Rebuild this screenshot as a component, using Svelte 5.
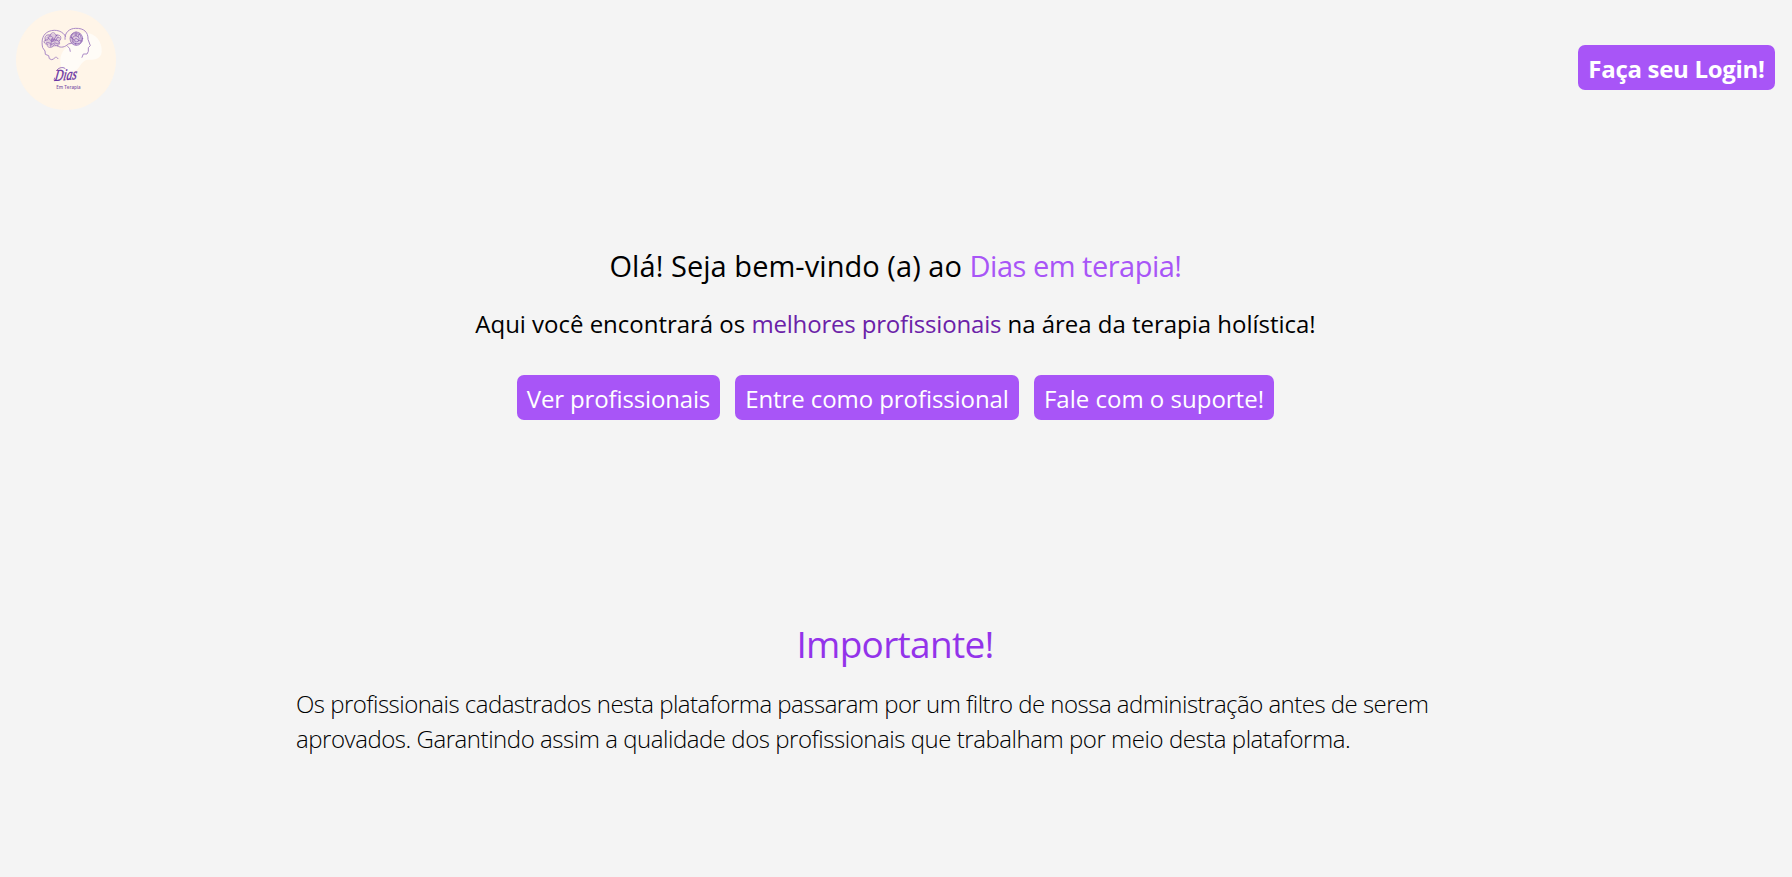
<script>
  const actions = [
    { label: 'Ver profissionais', width: 203, spacing: -0.15 },
    { label: 'Entre como profissional', width: 284, spacing: -0.08 },
    { label: 'Fale com o suporte!', width: 240, spacing: 0 }
  ];
</script>

<div class="page">
  <header>
    <svg class="logo" viewBox="0 0 300 300" role="img" aria-label="Dias em Terapia">
      <circle cx="150" cy="150" r="150" fill="#fff5e8" />
      <path d="M137 176C126 142 139 119 158 109C181 98 184 66 211 69C240 70 259 96 257 126C255 147 235 150 215 149C196 151 193 174 176 184C158 191 144 188 137 176Z" fill="#fffcf7" />
      <g fill="none" stroke="#ab8ac6" stroke-width="3" stroke-linecap="round" stroke-linejoin="round">
        <path d="M126 146C122 139 117 141 113 147L107 149L100 146L98 137L88 133L87 123L80 113C75 91 80 72 99 64C120 56 142 64 149 80" />
        <path d="M147 88C145 68 160 55 179 55C204 54 217 67 216 88L223 107L217 113L217 124L213 132L202 132L198 142" />
        <path d="M155 109Q163 113 163 124M124 108C136 115 147 111 157 102L168 99" />
      </g>
      <g fill="#b79acf" fill-opacity=".45">
        <ellipse cx="110" cy="91" rx="23" ry="20" />
        <ellipse cx="181" cy="86" rx="19" ry="20" />
      </g>
      <g fill="none" stroke="#8357ae" stroke-width="2" stroke-linecap="round">
        <path d="M88 91C83 79 93 71 103 76C105 64 119 67 120 77C136 70 139 89 128 94C137 103 122 112 115 104C108 117 91 113 94 103C81 102 82 89 91 90C102 90 93 75 106 79C118 84 101 92 114 93C126 94 118 77 130 83M91 99C104 93 101 108 112 101C121 94 125 108 128 99M96 83L109 96L123 74M104 109L107 86L126 92" />
        <ellipse cx="181" cy="86" rx="19" ry="20" />
        <path d="M167 85Q164 68 178 72Q195 69 195 83Q199 101 184 101Q166 102 169 87Q172 74 184 78Q194 83 187 94Q176 99 176 88Q179 82 185 88M164 82Q175 84 174 96M180 66L180 78M191 71L186 80M187 91L198 93M178 99L180 105" />
      </g>
      <text class="signature" transform="translate(115 213) rotate(-5) skewX(-14)" textLength="66" lengthAdjust="spacingAndGlyphs">Dias</text>
      <path d="M121 183C126 174 139 169 148 176M119 208Q112 216 116 203" fill="none" stroke="#6630a3" stroke-width="2" />
      <text class="tagline" x="121" y="238" textLength="73" lengthAdjust="spacingAndGlyphs">Em Terapia</text>
    </svg>
    <button class="login">Faça seu Login!</button>
  </header>

  <main>
    <section class="hero">
      <h1>Olá! Seja bem-vindo (a) ao <span>Dias em terapia!</span></h1>
      <p>Aqui você encontrará os <span>melhores profissionais</span> na área da terapia holística!</p>
      <div class="actions">
        {#each actions as action}
          <button style="width: {action.width}px; letter-spacing: {action.spacing}px">{action.label}</button>
        {/each}
      </div>
    </section>

    <section class="notice">
      <h2>Importante!</h2>
      <p>
        <span>Os profissionais cadastrados nesta plataforma passaram por um filtro de nossa administração antes de serem</span>
        <span class="second">aprovados. Garantindo assim a qualidade dos profissionais que trabalham por meio desta plataforma.</span>
      </p>
    </section>
  </main>
</div>

<style>
  :global(body) {
    margin: 0;
    background: #f4f4f4;
  }

  .page {
    height: 877px;
    overflow: hidden;
    background: #f4f4f4;
    color: #000;
    font-family: "Open Sans", "Noto Sans", sans-serif;
  }

  header {
    display: flex;
    align-items: flex-start;
    justify-content: space-between;
    height: 110px;
    padding: 10px 17px 0 16px;
    box-sizing: border-box;
  }

  .logo {
    width: 100px;
    height: 100px;
  }

  .signature {
    font: italic 400 48px "Liberation Serif", serif;
    fill: #6630a3;
    stroke: #6630a3;
    stroke-width: 1px;
  }

  .tagline {
    font: 600 13px "Open Sans", sans-serif;
    fill: #805aa8;
  }

  button {
    height: 45px;
    padding: 3px 0 0;
    border: 0;
    border-radius: 7px;
    background: #a855f7;
    color: #fff;
    font: 400 24px/42px "Open Sans", sans-serif;
    white-space: nowrap;
  }

  .login {
    width: 197px;
    margin-top: 35px;
    font-weight: 700;
    letter-spacing: -0.3px;
  }

  .hero {
    display: flex;
    flex-direction: column;
    align-items: center;
    padding: 136px 1px 0 0;
  }

  h1,
  h2,
  p {
    margin: 0;
    font-weight: 400;
    white-space: nowrap;
  }

  h1 {
    font-size: 29px;
    letter-spacing: 0.05px;
    line-height: 40px;
  }

  h1 span {
    color: #a855f7;
    letter-spacing: -0.5px;
  }

  .hero p {
    margin-top: 20px;
    font-size: 24px;
    line-height: 35px;
    letter-spacing: -0.02px;
  }

  .hero p span {
    color: #6b21a8;
    letter-spacing: -0.18px;
  }

  .actions {
    display: flex;
    gap: 15px;
    margin-top: 34px;
  }

  .notice {
    display: flex;
    flex-direction: column;
    align-items: center;
    padding-top: 199px;
  }

  h2 {
    padding-right: 2px;
    color: #9333ea;
    font-size: 37px;
    letter-spacing: -0.7px;
    line-height: 50px;
  }

  .notice p {
    width: 1200px;
    margin-top: 17px;
    font-size: 24px;
    font-weight: 300;
    line-height: 35px;
  }

  .notice p span {
    display: block;
    letter-spacing: -0.52px;
  }

  .notice p .second {
    letter-spacing: -0.46px;
  }
</style>
